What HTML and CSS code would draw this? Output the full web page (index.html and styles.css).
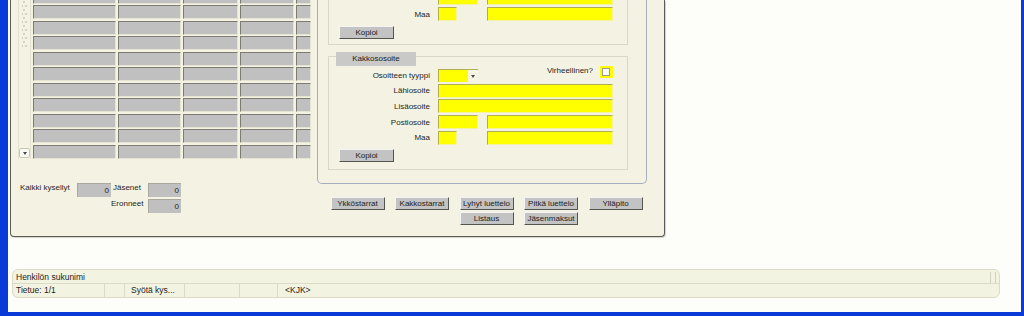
FILE: index.html
```html
<!DOCTYPE html>
<html>

<head>
    <title>Jäsenrekisteri</title>
    <link rel="stylesheet" href="styles.css">
</head>

<body>
    <div class="window">
        <div class="panel">
            <div class="left-col">
                <div class="list">
                    <div class="scrollbar">
                        <div class="thumb"></div>
                        <div class="track"></div>
                        <div class="arrow-btn"><span class="arrow-down"></span></div>
                    </div>
                    <div class="grid">
                        <div class="cell"></div><div class="cell"></div><div class="cell"></div><div class="cell"></div><div class="cell"></div>
                        <div class="cell"></div><div class="cell"></div><div class="cell"></div><div class="cell"></div><div class="cell"></div>
                        <div class="cell"></div><div class="cell"></div><div class="cell"></div><div class="cell"></div><div class="cell"></div>
                        <div class="cell"></div><div class="cell"></div><div class="cell"></div><div class="cell"></div><div class="cell"></div>
                        <div class="cell"></div><div class="cell"></div><div class="cell"></div><div class="cell"></div><div class="cell"></div>
                        <div class="cell"></div><div class="cell"></div><div class="cell"></div><div class="cell"></div><div class="cell"></div>
                        <div class="cell"></div><div class="cell"></div><div class="cell"></div><div class="cell"></div><div class="cell"></div>
                        <div class="cell"></div><div class="cell"></div><div class="cell"></div><div class="cell"></div><div class="cell"></div>
                        <div class="cell"></div><div class="cell"></div><div class="cell"></div><div class="cell"></div><div class="cell"></div>
                        <div class="cell"></div><div class="cell"></div><div class="cell"></div><div class="cell"></div><div class="cell"></div>
                        <div class="cell"></div><div class="cell"></div><div class="cell"></div><div class="cell"></div><div class="cell"></div>
                    </div>
                </div>

                <div class="stats">
                    <div class="stat-label">Kaikki kysellyt</div>
                    <div class="num">0</div>
                    <div class="stat-label right">Jäsenet</div>
                    <div class="num">0</div>
                    <div class="stat-label right second">Eronneet</div>
                    <div class="num">0</div>
                </div>
            </div>

            <div class="right-col">
                <div class="addr-box">
                    <!-- Ykkösosoite (scrolled up) -->
                    <div class="fieldset first">
                        <div class="rows">
                            <div class="row">
                                <div class="row-label"></div>
                                <div class="field w-post"></div>
                                <div class="field w-city"></div>
                            </div>
                            <div class="row">
                                <div class="row-label">Maa</div>
                                <div class="field w-country"></div>
                                <div class="field w-city wide-gap"></div>
                            </div>
                        </div>
                        <button class="btn copy">Kopioi</button>
                    </div>

                    <!-- Kakkososoite -->
                    <div class="fieldset second">
                        <div class="legend">Kakkososoite</div>
                        <div class="rows tight">
                            <div class="row short">
                                <div class="row-label">Osoitteen tyyppi</div>
                                <div class="select">
                                    <div class="select-btn"><span class="arrow-down"></span></div>
                                </div>
                                <div class="flag">
                                    <span class="flag-label">Virheellinen?</span>
                                    <div class="check"><div class="check-box"></div></div>
                                </div>
                            </div>
                            <div class="row">
                                <div class="row-label">Lähiosoite</div>
                                <div class="field w-long"></div>
                            </div>
                            <div class="row">
                                <div class="row-label">Lisäosoite</div>
                                <div class="field w-long"></div>
                            </div>
                            <div class="row">
                                <div class="row-label">Postiosoite</div>
                                <div class="field w-post"></div>
                                <div class="field w-city"></div>
                            </div>
                            <div class="row">
                                <div class="row-label">Maa</div>
                                <div class="field w-country"></div>
                                <div class="field w-city wide-gap"></div>
                            </div>
                        </div>
                        <button class="btn copy">Kopioi</button>
                    </div>
                </div>

                <div class="actions">
                    <button class="btn">Ykköstarrat</button>
                    <button class="btn">Kakkostarrat</button>
                    <button class="btn">Lyhyt luettelo</button>
                    <button class="btn">Pitkä luettelo</button>
                    <button class="btn">Ylläpito</button>
                    <button class="btn col3">Listaus</button>
                    <button class="btn col4">Jäsenmaksut</button>
                </div>
            </div>
        </div>

        <div class="statusbar">
            <div class="status-top">
                <span>Henkilön sukunimi</span>
                <span class="grip"></span>
            </div>
            <div class="status-bottom">
                <div class="seg s1">Tietue: 1/1</div>
                <div class="seg s2"></div>
                <div class="seg s3">Syötä kys...</div>
                <div class="seg s4"></div>
                <div class="seg s5"></div>
                <div class="seg s6">&lt;KJK&gt;</div>
            </div>
        </div>
    </div>
</body>

</html>
```

FILE: styles.css
```css
* {
    box-sizing: border-box;
}

body {
    margin: 0;
    font-family: "Liberation Sans", Arial, sans-serif;
    font-size: 8px;
    color: #1e1e1e;
    background-color: #0a3ad8;
}

.window {
    width: 1024px;
    height: 316px;
    border-left: 8px solid #0a3ad8;
    border-right: 3px solid #0a3ad8;
    border-bottom: 4px solid #0a3ad8;
    background-color: #fdfdf9;
    display: flex;
    flex-direction: column;
    overflow: hidden;
}

/* main form panel */
.panel {
    flex: none;
    margin-left: 2px;
    width: 655px;
    height: 237px;
    background-color: #f4f3e3;
    border: 1px solid #5c5c58;
    border-top: none;
    border-radius: 0 0 4px 4px;
    box-shadow: 1px 1px 0 #d6d6c8;
    display: flex;
    gap: 5px;
}

.left-col {
    width: 301px;
    padding-left: 7px;
    display: flex;
    flex-direction: column;
}

.list {
    display: flex;
    gap: 2px;
    margin-top: -10.5px;
    height: 169px;
}

.scrollbar {
    width: 13px;
    display: flex;
    flex-direction: column;
    border-left: 1px solid #e4e3d2;
    border-right: 1px solid #e4e3d2;
}

.thumb {
    height: 58px;
    margin: 0 3px 0 3px;
    background:
        radial-gradient(circle, #c2c2b2 0.6px, transparent 0.9px) 0 0 / 4px 8px,
        radial-gradient(circle, #c2c2b2 0.6px, transparent 0.9px) 2px 4px / 4px 8px;
}

.track {
    flex: 1;
}

.arrow-btn {
    height: 10px;
    margin: 0 0 0.5px;
    border: 1px solid #c9c8b6;
    border-radius: 2px;
    background-color: #fbfbf5;
    display: flex;
    align-items: center;
    justify-content: center;
}

.arrow-down {
    width: 0;
    height: 0;
    border-left: 2.5px solid transparent;
    border-right: 2.5px solid transparent;
    border-top: 3px solid #4a4a4a;
}

.grid {
    display: grid;
    grid-template-columns: 83px 63px 55px 54px 15px;
    grid-template-rows: repeat(11, 14px);
    column-gap: 2px;
    row-gap: 1.5px;
}

.cell {
    background-color: #c0c0c0;
    border-top: 1px solid #7c7c72;
    border-left: 1px solid #7c7c72;
    border-right: 1px solid #e6e5d4;
    border-bottom: 1px solid #e6e5d4;
}

.stats {
    margin-top: 24.5px;
    margin-left: 2px;
    display: grid;
    grid-template-columns: 57px 34px 37px 33px;
    grid-template-rows: 14px 14px;
    row-gap: 2px;
}

.stat-label {
    line-height: 10px;
    white-space: nowrap;
}

.stat-label.right {
    text-align: right;
    padding-right: 7px;
}

.stat-label.second {
    grid-column: 3;
}

.num {
    background-color: #c0c0c0;
    border-top: 1px solid #a8a89c;
    border-left: 1px solid #a8a89c;
    text-align: right;
    padding-right: 2px;
    line-height: 13px;
}

/* address area */
.right-col {
    width: 330px;
    display: flex;
    flex-direction: column;
}

.addr-box {
    border: 1px solid #a6adbf;
    border-top: none;
    border-radius: 0 0 5px 5px;
    padding: 0 18px 13px 10px;
}

.fieldset {
    border: 1px solid #d9d8c6;
}

.fieldset.first {
    border-top: none;
    margin-top: -9px;
    padding: 0 14px 5px 0;
}

.fieldset.second {
    margin-top: 11px;
    padding: 0 14px 7px 0;
}

.legend {
    margin: -5px 0 0 7px;
    width: 80px;
    height: 14px;
    line-height: 14px;
    text-align: center;
    background-color: #c9c9c7;
}

.rows {
    display: flex;
    flex-direction: column;
    gap: 2px;
}

.rows.tight {
    margin-top: 3px;
    gap: 1.7px;
}

.row {
    display: flex;
    align-items: center;
    height: 14px;
}

.row.short {
    height: 13px;
}

.row-label {
    width: 101px;
    margin-right: 8px;
    text-align: right;
    white-space: nowrap;
}

.field {
    height: 14px;
    background-color: #ffff00;
    border-top: 1px solid #b0ae50;
    border-left: 1px solid #b0ae50;
    border-right: 1px solid #f4f3a0;
    border-bottom: 1px solid #f4f3a0;
}

.w-long {
    width: 175px;
}

.w-post {
    width: 40px;
}

.w-country {
    width: 19px;
}

.w-city {
    width: 126px;
    margin-left: 9px;
}

.w-city.wide-gap {
    margin-left: 30px;
}

.select {
    width: 40px;
    height: 13px;
    display: flex;
    background-color: #ffff00;
    border-top: 1px solid #b0ae50;
    border-left: 1px solid #b0ae50;
}

.select-btn {
    margin-left: auto;
    width: 10px;
    background-color: #f6f5e4;
    display: flex;
    align-items: center;
    justify-content: center;
}

.flag {
    margin-left: auto;
    margin-top: -3px;
    align-self: flex-start;
    display: flex;
    align-items: flex-start;
}

.flag-label {
    line-height: 9px;
}

.check {
    margin-left: 7px;
    width: 13px;
    height: 12px;
    padding: 2px;
    background-color: #ffff00;
}

.check-box {
    width: 8px;
    height: 8px;
    background-color: #fff;
    border: 1px solid #9a9a90;
}

.btn {
    height: 13px;
    padding: 0;
    font: inherit;
    line-height: 11px;
    color: #222;
    text-align: center;
    background-color: #c3c3c3;
    border: 1px solid;
    border-color: #f4f4f4 #55554f #55554f #f4f4f4;
}

.btn.copy {
    display: block;
    width: 55px;
    margin: 5px 0 0 10px;
}

.fieldset.second .btn.copy {
    margin-top: 4px;
}

.actions {
    margin: 13px 0 0 13.5px;
    display: grid;
    grid-template-columns: repeat(5, 54px);
    grid-template-rows: 13px 13px;
    column-gap: 10.5px;
    row-gap: 2px;
}

.col3 {
    grid-column: 3;
}

.col4 {
    grid-column: 4;
}

/* status bar */
.statusbar {
    margin: 32px 0 0 4px;
    width: 988px;
    height: 29px;
    font-size: 8.5px;
    background-color: #f3f3e2;
    border: 1px solid #dcdbc9;
    border-radius: 6px;
}

.status-top {
    height: 14px;
    line-height: 14px;
    padding-left: 3px;
    border-bottom: 1px solid #dcdbc9;
    display: flex;
}

.grip {
    margin: 2px 3px 0 auto;
    width: 6px;
    height: 11px;
    border-left: 1px solid #d2d1c0;
    border-right: 1px solid #d2d1c0;
}

.status-bottom {
    display: flex;
    height: 13px;
    line-height: 13px;
}

.seg {
    border-right: 1px solid #dcdbc9;
    white-space: nowrap;
}

.s1 {
    width: 92px;
    padding-left: 3px;
}

.s2 {
    width: 20px;
}

.s3 {
    width: 60px;
    padding-left: 6px;
}

.s4 {
    width: 55px;
}

.s5 {
    width: 38px;
}

.s6 {
    flex: 1;
    padding-left: 7px;
    border-right: none;
}
```
